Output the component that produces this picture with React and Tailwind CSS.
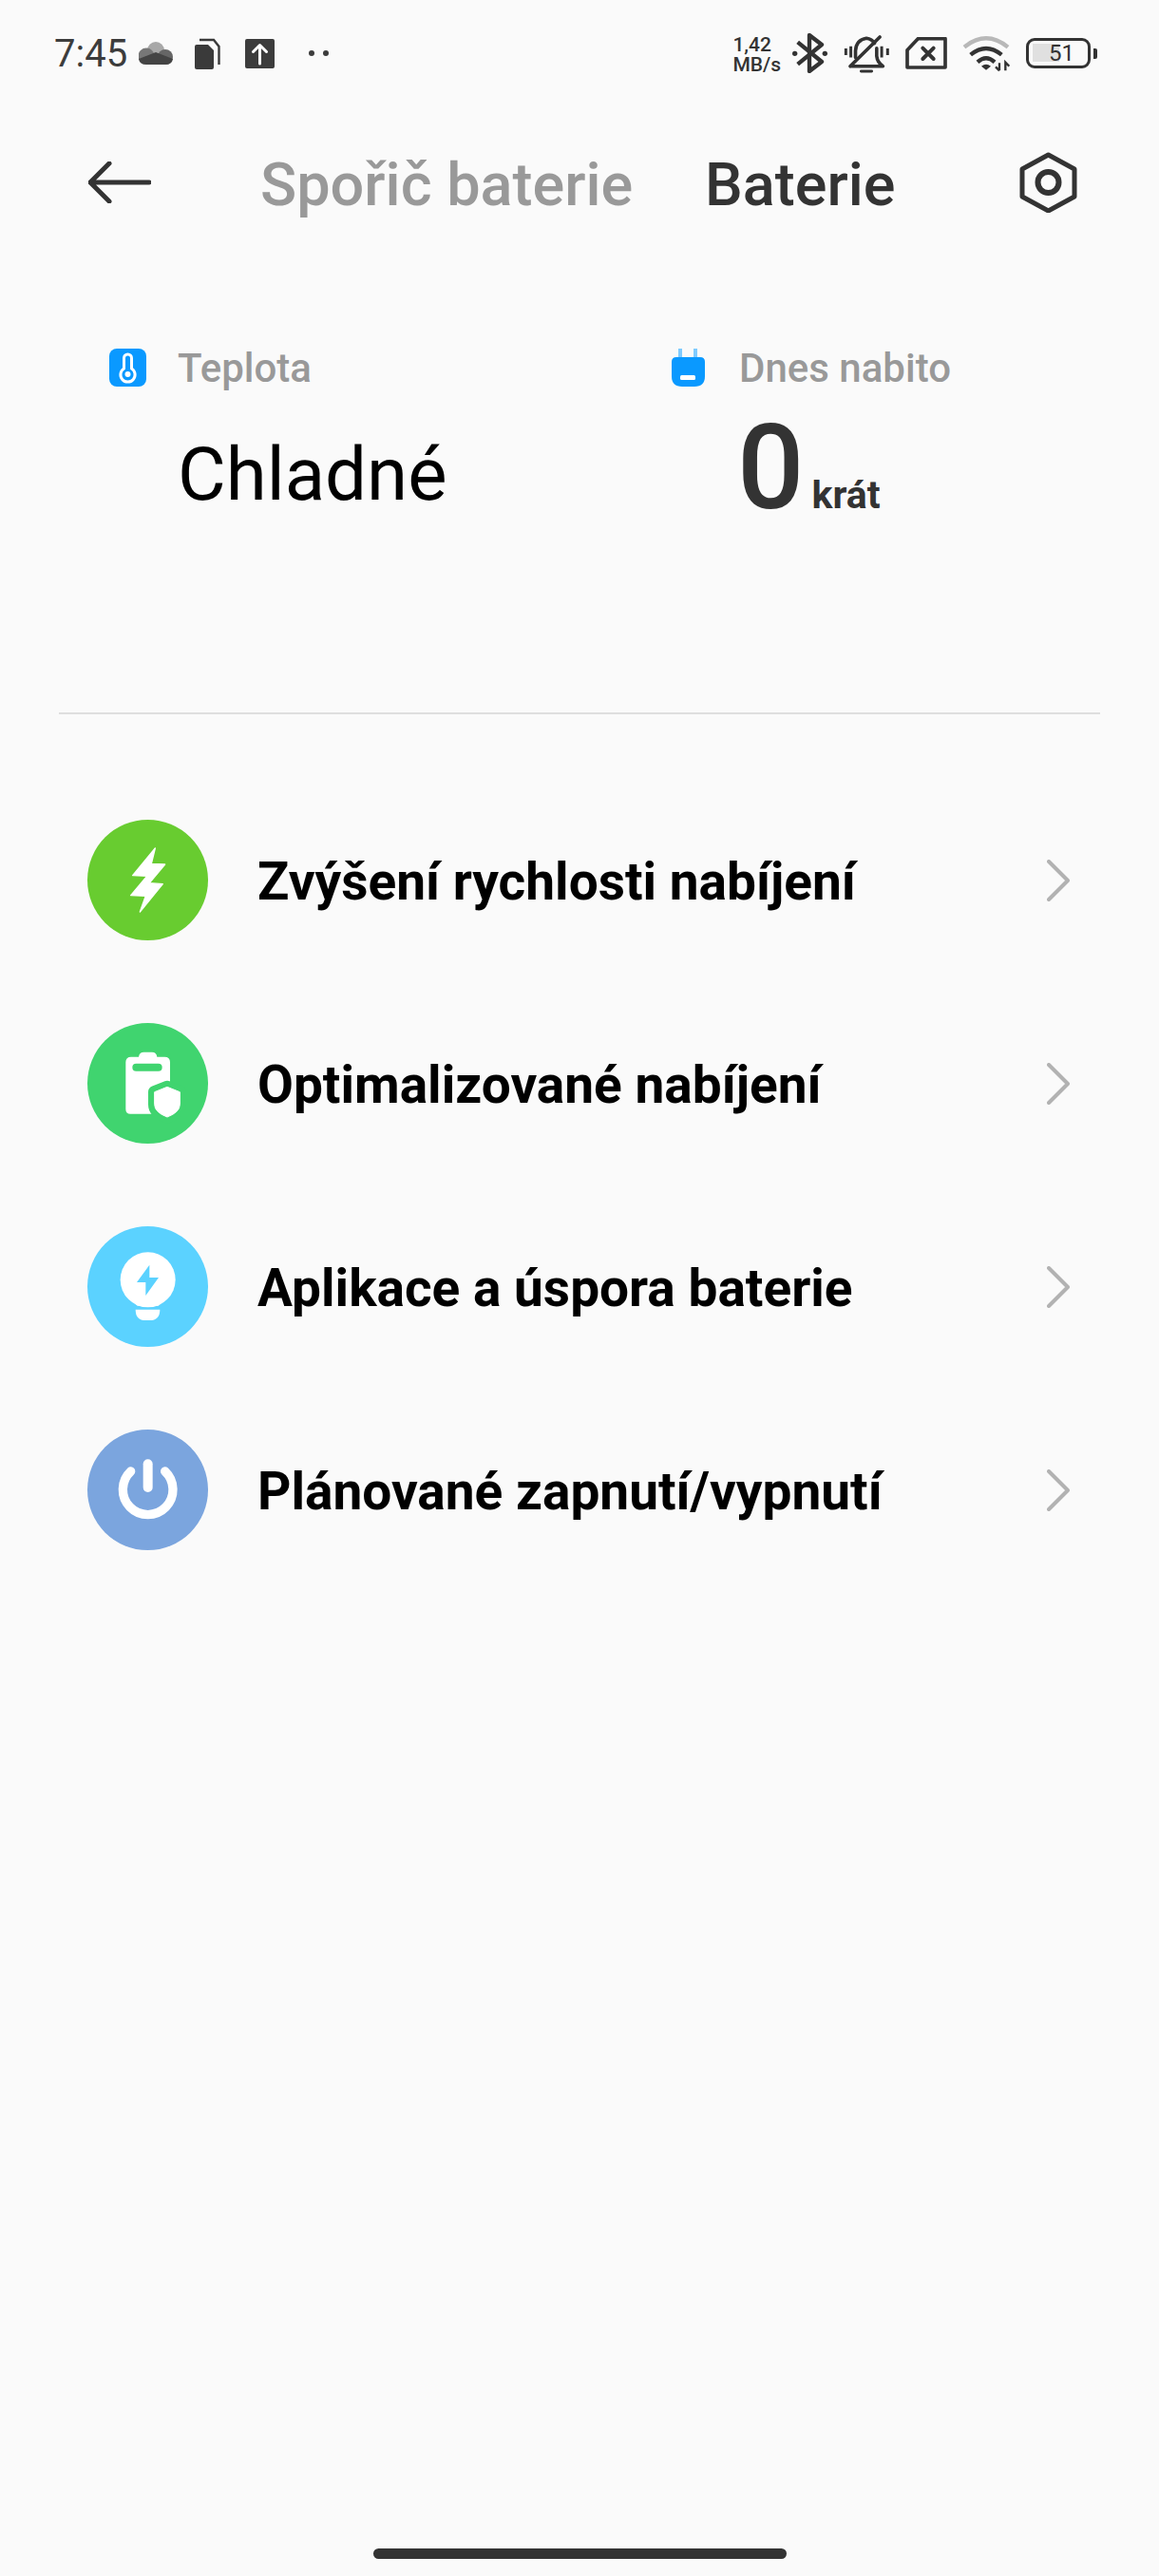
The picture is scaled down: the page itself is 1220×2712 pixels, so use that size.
import React from 'react';

const rows = [
  { label: 'Zvýšení rychlosti nabíjení', color: 'bg-[#68cc30]', icon: <BoltIcon /> },
  { label: 'Optimalizované nabíjení', color: 'bg-[#40d46f]', icon: <BatteryShieldIcon /> },
  { label: 'Aplikace a úspora baterie', color: 'bg-[#5bd2ff]', icon: <BulbIcon /> },
  { label: 'Plánované zapnutí/vypnutí', color: 'bg-[#7ba5de]', icon: <PowerIcon /> },
];

function BoltIcon() {
  return (
    <svg viewBox="66 36 381 381" className="w-full h-full">
      <path d="M280 126 L209 212 L254 214 L203 275 L250 277 L232 327 L304 239 L262 236 L311 177 L268 175 Z" fill="#fff" stroke="#fff" strokeWidth="4" strokeLinejoin="round" />
    </svg>
  );
}

function BatteryShieldIcon() {
  return (
    <svg viewBox="66 48 381 381" className="w-full h-full">
      <path d="M187 172 Q187 155 204 155 H228 Q230 140 244 140 H270 Q284 140 286 155 H310 Q327 155 327 172 V320 Q327 335 312 335 H202 Q187 335 187 320 Z" fill="#fff" />
      <rect x="208" y="176" width="94" height="24" rx="12" fill="#40d46f" />
      <path d="M318 250 L358 266 V305 Q358 330 318 345 Q278 330 278 305 V266 Z" fill="#40d46f" stroke="#40d46f" strokeWidth="40" strokeLinejoin="round" />
      <path d="M318 250 L358 266 V305 Q358 330 318 345 Q278 330 278 305 V266 Z" fill="#fff" stroke="#fff" strokeWidth="3" strokeLinejoin="round" />
    </svg>
  );
}

function BulbIcon() {
  return (
    <svg viewBox="66 45 381 381" className="w-full h-full">
      <circle cx="257" cy="214" r="87" fill="#fff" />
      <path d="M215 288 H299 L290 296 H224 Z" fill="#fff" />
      <path d="M218 308 H295 Q295 342 262 342 H250 Q218 342 218 308 Z" fill="#fff" />
      <path d="M262 167 L222 222 H250 V264 L291 207 H262 Z" fill="#5bd2ff" />
    </svg>
  );
}

function PowerIcon() {
  return (
    <svg viewBox="66 41 381 381" className="w-full h-full" fill="none" stroke="#fff" strokeLinecap="round">
      <path d="M203 173 A79 79 0 1 0 311 173" strokeWidth="28" />
      <path d="M257 150 V224" strokeWidth="30" />
    </svg>
  );
}

function Chevron() {
  return (
    <svg width="24" height="44" viewBox="0 0 24 44" fill="none" stroke="#b2b2b2" strokeWidth="4" strokeLinecap="round" strokeLinejoin="round">
      <path d="M2 2 L22 22 L2 42" />
    </svg>
  );
}

function LeftStatusIcons() {
  return (
    <div className="flex items-center">
      <svg width="36" height="24" viewBox="147 43 36 24" className="ml-[12px]">
        <circle cx="165" cy="52" r="9" fill="#a8a8a8" />
        <circle cx="155" cy="58" r="8.5" fill="#777" />
        <circle cx="175" cy="59" r="8" fill="#666" />
        <path d="M147 61 L165 54 L183 61 Q182 67 175 67 H155 Q148 67 147 61 Z" fill="#444" />
      </svg>
      <svg width="27" height="33" viewBox="206 39 27 33" className="ml-[23px]">
        <path d="M208 46 H220 L226 52 V70 Q226 72 224 72 H208 Q206 72 206 70 V48 Q206 46 208 46 Z" fill="#3a3a3a" />
        <path d="M211 41 H226 L231.5 48 V67" fill="none" stroke="#3a3a3a" strokeWidth="2.4" />
      </svg>
      <svg width="31" height="31" viewBox="0 0 31 31" className="ml-[26px]">
        <rect width="31" height="31" rx="2" fill="#3c3c3c" />
        <path d="M15.5 26 V7 M8.5 13.5 L15.5 6.5 L22.5 13.5" fill="none" stroke="#fff" strokeWidth="3" strokeLinecap="round" strokeLinejoin="round" />
      </svg>
      <div className="ml-[36px] flex gap-[9px]">
        <div className="w-[6px] h-[6px] rounded-full bg-[#3c3c3c]" />
        <div className="w-[6px] h-[6px] rounded-full bg-[#3c3c3c]" />
      </div>
    </div>
  );
}

function RightStatusIcons() {
  return (
    <div className="flex items-center text-[#333]">
      <div className="flex flex-col items-start text-[21px] leading-[21px] font-medium mt-[3px]">
        <span>1,42</span>
        <span>MB/s</span>
      </div>
      <svg width="39" height="42" viewBox="280 102 117 126" className="ml-[11px]" fill="none" stroke="#333" strokeWidth="13" strokeLinejoin="round">
        <path d="M300 130 L376 192 L337 222 V108 L376 138 L300 200" />
        <circle cx="291" cy="166" r="8" fill="#333" stroke="none" />
        <circle cx="386" cy="166" r="8" fill="#333" stroke="none" />
      </svg>
      <svg width="49" height="41" viewBox="445 105 147 125" className="ml-[16px]" fill="none" stroke="#333" strokeWidth="11" strokeLinecap="round" strokeLinejoin="round">
        <path d="M482 180 V158 Q484 124 517 118 Q535 121 543 134 M550 150 V175 Q552 195 570 208 H470" />
        <path d="M465 208 L560 114" />
        <path d="M500 224 H534" strokeWidth="9" />
        <path d="M451 151 V172 M467 144 V180 M566 144 V180 M585 151 V172" strokeWidth="9" strokeLinecap="butt" />
      </svg>
      <svg width="45" height="34" viewBox="640 121 135 102" className="ml-[16px]" fill="none" stroke="#333" strokeWidth="11" strokeLinejoin="round">
        <path d="M680 126 H766 V217 H646 V162 Z" />
        <path d="M695 156 L729 190 M729 156 L695 190" strokeLinecap="round" strokeWidth="12" />
      </svg>
      <svg width="50" height="39" viewBox="820 112 150 117" className="ml-[15px]" fill="none" strokeLinecap="butt">
        <path d="M826 150 Q895 94 964 150" stroke="#b8b8b8" strokeWidth="13" />
        <path d="M846 174 Q895 134 944 174" stroke="#333" strokeWidth="13" />
        <path d="M868 197 Q895 172 922 197" stroke="#333" strokeWidth="13" />
        <path d="M880 210 Q895 198 910 210 L895 222 Z" fill="#333" />
        <path d="M937 200 V224 M925 212 L937 224 M956 224 V198 L968 210" stroke="#333" strokeWidth="7" />
      </svg>
      <div className="ml-[17px] flex items-center">
        <div className="relative w-[68px] h-[32px] rounded-[9px] border-[3px] border-[#333] flex items-center justify-center">
          <div className="absolute left-[4px] top-[3px] w-[28px] h-[19px] bg-[#e0e0e0]" />
          <span className="relative text-[24px] leading-none text-[#333] pl-[7px]">51</span>
        </div>
        <div className="ml-[3px] w-[4px] h-[11px] rounded-r-[2px] bg-[#333]" />
      </div>
    </div>
  );
}

function ThermoIcon() {
  return (
    <svg width="39" height="40" viewBox="0 0 39 40">
      <rect width="39" height="40" rx="8" fill="#0a99ff" />
      <path d="M15.5 10 A4 4 0 0 1 23.5 10 V21 A7.6 7.6 0 1 1 15.5 21 Z" fill="none" stroke="#fff" strokeWidth="3" />
      <circle cx="19.5" cy="27" r="3" fill="#fff" />
    </svg>
  );
}

function PlugIcon() {
  return (
    <svg width="35" height="40" viewBox="0 0 35 40">
      <rect x="7" y="0" width="4" height="10" fill="#7fcbff" />
      <rect x="23" y="0" width="4" height="10" fill="#7fcbff" />
      <path d="M0 14 Q0 9 5 9 H30 Q35 9 35 14 V29 Q35 40 24 40 H11 Q0 40 0 29 Z" fill="#0a99ff" />
      <rect x="9" y="28" width="16" height="5" rx="1.5" fill="#fff" />
    </svg>
  );
}

export default function App() {
  return (
    <div className="min-h-[2712px] flex flex-col bg-[#fafafa] font-['Roboto',sans-serif]">
      <div className="h-[44px] mt-[34px] flex items-center justify-between pl-[57px] pr-[65px]">
        <div className="flex items-center">
          <span className="text-[40px] leading-none text-[#3c3c3c] mt-[2px]">7:45</span>
          <LeftStatusIcons />
        </div>
        <RightStatusIcons />
      </div>

      <div className="h-[64px] mt-[82px] flex items-center pl-[93px]">
        <svg width="66" height="44" viewBox="0 0 66 44" fill="none" stroke="#333" strokeWidth="5" strokeLinecap="round" strokeLinejoin="round">
          <path d="M2 22 H64 M22 2 L2 22 L22 42" />
        </svg>
        <span className="ml-[115px] mt-[5px] w-[468px] text-[63px] leading-none font-medium text-[#999]">Spořič baterie</span>
        <span className="mt-[5px] text-[63px] leading-none font-medium text-[#333]">Baterie</span>
        <svg width="61" height="64" viewBox="0 0 61 64" fill="none" stroke="#333" className="ml-[130px]">
          <path d="M30.5 3 L58 18 V47 L30.5 62 L3 47 V18 Z" strokeWidth="5" strokeLinejoin="round" />
          <circle cx="30.5" cy="32" r="11" strokeWidth="6" />
        </svg>
      </div>

      <div className="h-[383px] mt-[143px] flex">
        <div className="w-[593px] pl-[115px]">
          <div className="flex items-center h-[40px]">
            <ThermoIcon />
            <span className="ml-[33px] mt-[2px] text-[42px] font-medium text-[#999] leading-none">Teplota</span>
          </div>
          <div className="ml-[72px] mt-[54px] text-[78px] leading-none text-black">Chladné</div>
        </div>
        <div className="pl-[114px]">
          <div className="flex items-center h-[40px]">
            <PlugIcon />
            <span className="ml-[36px] mt-[2px] text-[42px] font-medium text-[#999] leading-none">Dnes nabito</span>
          </div>
          <div className="ml-[69px] mt-[24px] flex items-baseline text-[#333]">
            <span className="text-[124px] leading-none font-medium">0</span>
            <span className="ml-[8px] text-[41px] leading-none font-bold">krát</span>
          </div>
        </div>
      </div>

      <div className="mx-[62px] h-[2px] bg-[#dedede]" />

      <div className="mt-[111px] flex flex-col gap-[87px]">
        {rows.map((row) => (
          <div key={row.label} className="flex items-center pl-[92px] pr-[94px]">
            <div className={`w-[127px] h-[127px] rounded-full shrink-0 ${row.color}`}>{row.icon}</div>
            <span className="ml-[52px] mt-[3px] flex-1 text-[55px] leading-none font-bold text-black">{row.label}</span>
            <Chevron />
          </div>
        ))}
      </div>

      <div className="mt-auto mb-[18px] mx-auto w-[435px] h-[11px] rounded-full bg-[#333]" />
    </div>
  );
}
